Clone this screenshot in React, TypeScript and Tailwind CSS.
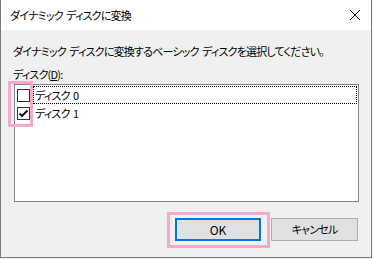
import React from "react";

const font = "font-['Yu_Gothic_UI','Noto_Sans_CJK_JP',sans-serif] [font-feature-settings:'palt']";

function Check({ checked }: { checked?: boolean }) {
  return (
    <div className="w-[13px] h-[13px] border border-[#333333] bg-white flex items-center justify-center shrink-0">
      {checked && (
        <svg width="11" height="11" viewBox="0 0 11 11">
          <path d="M1.5 5.5 L4 8 L9.5 2.5" fill="none" stroke="#000" strokeWidth="1.8" />
        </svg>
      )}
    </div>
  );
}

export default function App() {
  return (
    <div className={`w-[373px] h-[259px] bg-[#f0f0f0] relative overflow-hidden ${font} text-[11px] text-black`}>
      <div className="w-[372px] h-[258px] border-l border-r border-b border-[#7a7a7a] flex flex-col bg-[#f0f0f0]">
        <div className="h-[30px] bg-white flex items-center justify-between pl-[9px] pr-[10px] shrink-0">
          <span className="tracking-[-0.8px] whitespace-pre">ダイナミック  ディスクに変換</span>
          <svg width="12" height="12" viewBox="0 0 12 12">
            <path d="M1 1 L11 11 M11 1 L1 11" stroke="#000" strokeWidth="1" />
          </svg>
        </div>
        <div className="flex flex-col pl-[12px] pr-[13px]">
          <div className="h-[18px] mt-[12px] leading-[18px] tracking-[-0.8px] whitespace-pre">
            ダイナミック  ディスクに変換するベーシック  ディスクを選択してください。
          </div>
          <div className="h-[18px] mt-[5px] leading-[18px] tracking-[-0.8px] whitespace-nowrap">
            ディスク(<span className="underline">D</span>):
          </div>
          <div className="mt-[1px] ml-[1px] w-[345px] h-[118px] border border-[#828790] bg-white p-[1px] flex flex-col">
            <div className="h-[18px] flex items-center">
              <div className="ml-[1px]"><Check /></div>
              <div className="ml-[3px] flex-1 h-[18px] border border-dotted border-black leading-[16px] pl-[1px] tracking-[-0.8px] whitespace-pre">
                ディスク  0
              </div>
            </div>
            <div className="h-[18px] flex items-center">
              <div className="ml-[1px]"><Check checked /></div>
              <div className="ml-[3px] flex-1 h-[18px] leading-[18px] pl-[2px] tracking-[-0.8px] whitespace-pre">
                ディスク  1
              </div>
            </div>
          </div>
          <div className="flex justify-end gap-[10px] mt-[16px]">
            <button className="w-[86px] h-[23px] border-2 border-[#0078d7] bg-[#e1e1e1] flex items-center justify-center text-[12px]">
              OK
            </button>
            <button className="w-[87px] h-[23px] border border-[#adadad] bg-[#e1e1e1] flex items-center justify-center tracking-[-0.8px] whitespace-nowrap">
              キャンセル
            </button>
          </div>
        </div>
      </div>
      <div className="absolute left-[8px] top-[81px] w-[25px] h-[46px] border-[3px] border-[#f4aac8]" />
      <div className="absolute left-[167px] top-[212px] w-[103px] h-[36px] border-[3px] border-[#f4aac8]" />
    </div>
  );
}
